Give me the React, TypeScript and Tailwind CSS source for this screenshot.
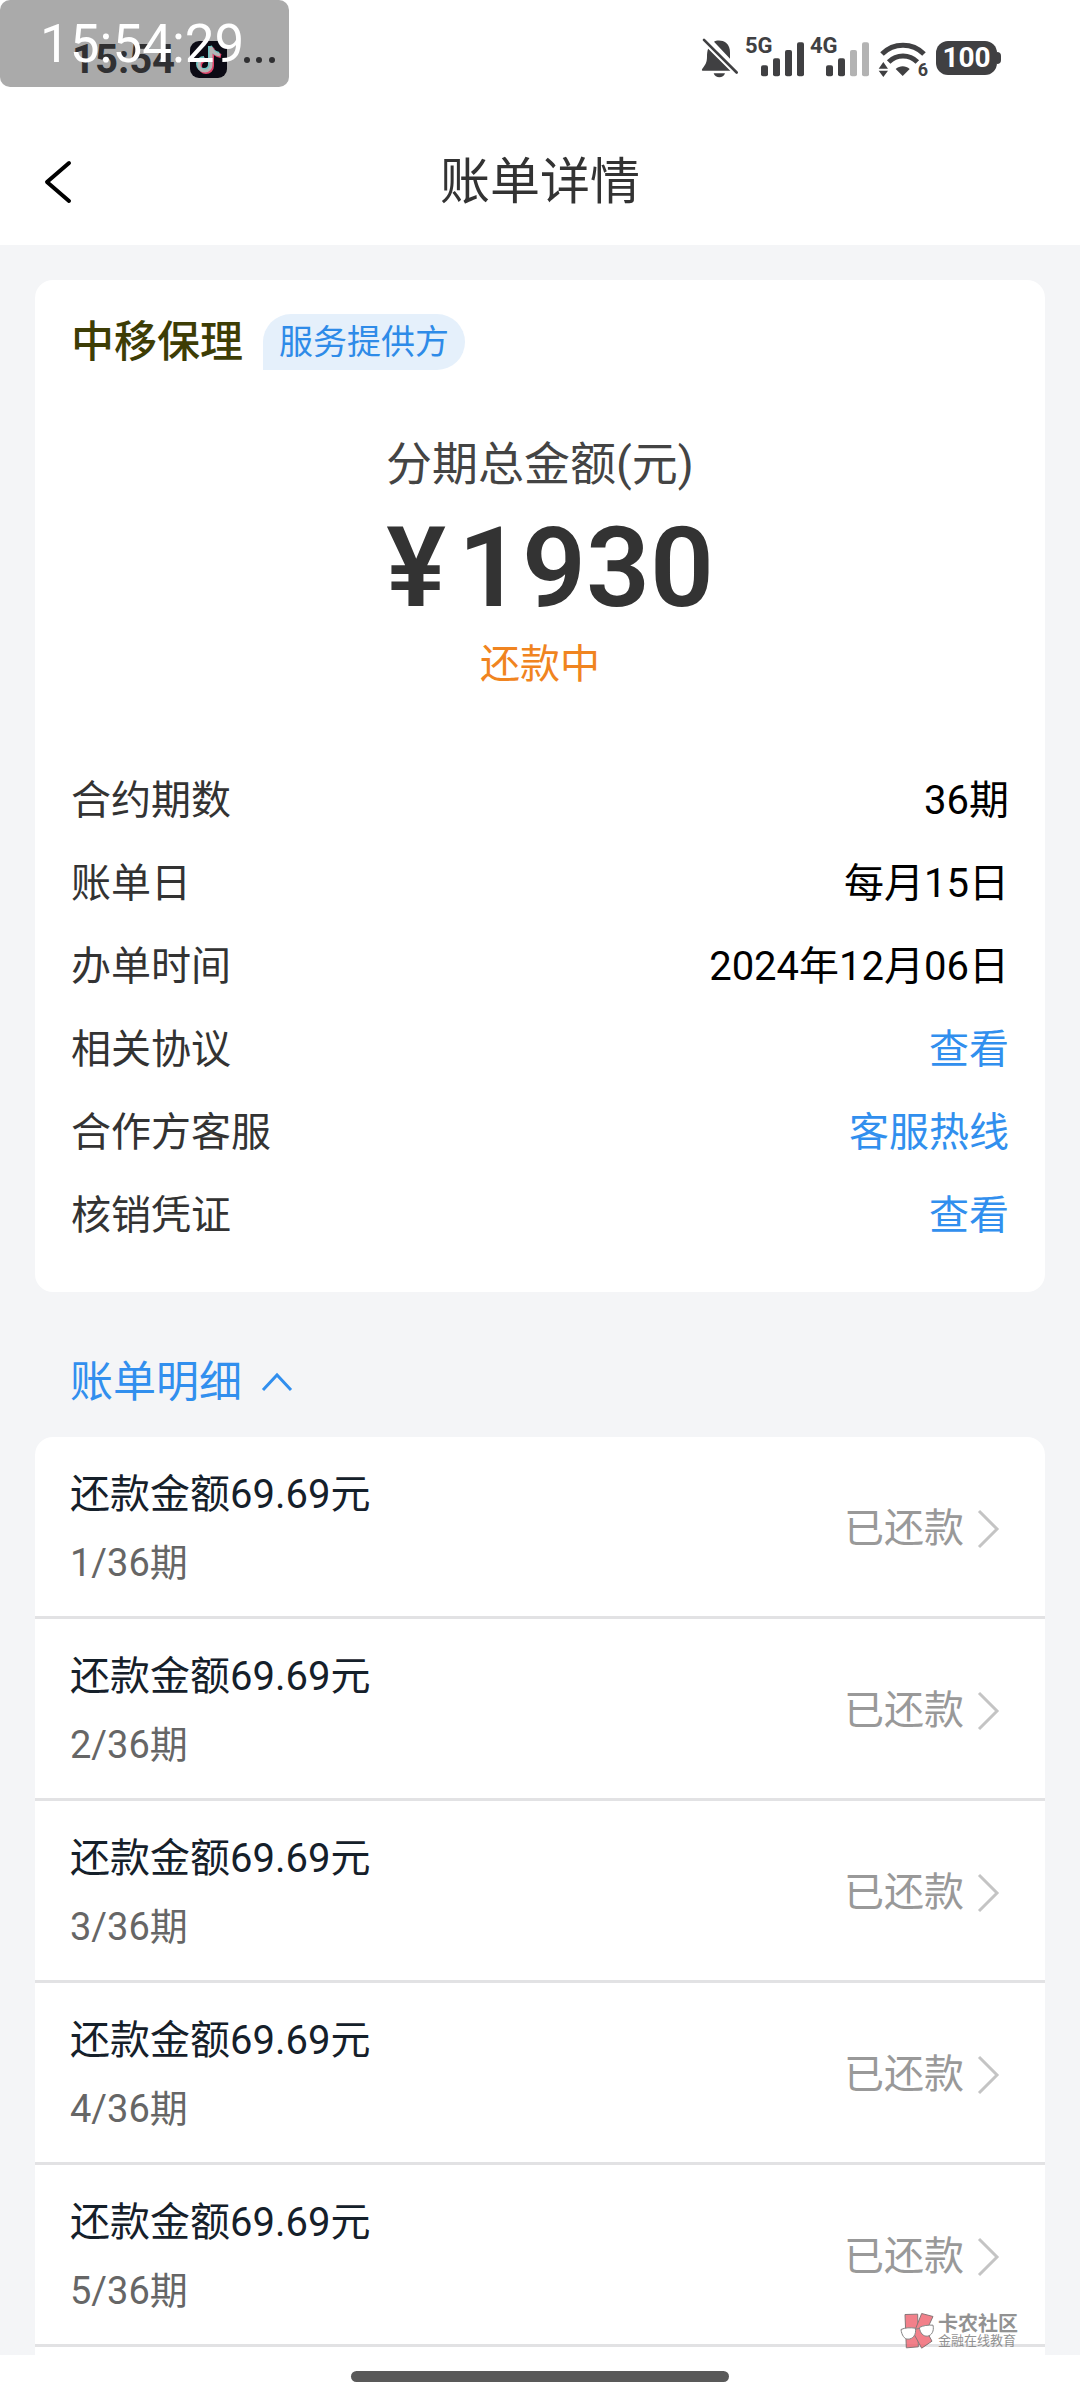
import { FC, useState } from "react";

type DetailRow = {
  label: string;
  value: string;
  href?: string;
};

const details: DetailRow[] = [
  { label: "合约期数", value: "36期" },
  { label: "账单日", value: "每月15日" },
  { label: "办单时间", value: "2024年12月06日" },
  { label: "相关协议", value: "查看", href: "#agreement" },
  { label: "合作方客服", value: "客服热线", href: "#hotline" },
  { label: "核销凭证", value: "查看", href: "#voucher" },
];

const TOTAL_PERIODS = 36;
const bills = [1, 2, 3, 4, 5].map((period) => ({ period, amount: "69.69", status: "已还款" }));

const BellOffIcon: FC = () => (
  <svg viewBox="50 50 120 125" className="w-[40px] h-[42px]" fill="#404042">
    <path d="M92 64c6-5 26-6 36 3c9 8 12 17 12 30v18z" />
    <path d="M75 83l68 68H58c-3 0-3-3-1-6c10-13 14-20 14-36c0-10 1-19 4-26z" />
    <path d="M91 158h34c-4 16-30 16-34 0z" />
    <path d="M62 58l98 98" stroke="#fff" strokeWidth="20" />
    <path d="M62 58l98 98" stroke="#404042" strokeWidth="8" strokeLinecap="round" />
  </svg>
);

type SignalProps = {
  label: string;
  strength: number;
};

const Signal: FC<SignalProps> = ({ label, strength }) => (
  <div className="relative w-[60px] h-[42px]">
    <span className="absolute left-0 top-0 text-[22px] leading-[18px] font-bold">{label}</span>
    <svg viewBox="0 0 180 126" className="w-full h-full">
      {[
        { x: 48, y: 85 },
        { x: 84, y: 64 },
        { x: 120, y: 39 },
        { x: 156, y: 16 },
      ].map(({ x, y }, i) => (
        <rect key={x} x={x} y={y} width="21" height={118 - y} rx="6" fill={i < strength ? "#404042" : "#b3b3b3"} />
      ))}
    </svg>
  </div>
);

const WifiIcon: FC = () => (
  <div className="relative w-[50px] h-[42px]">
    <svg viewBox="585 50 150 126" className="w-full h-full">
      <g fill="none" stroke="#404042" strokeWidth="15">
        <path d="M597 101c35-35 91-35 126 0" />
        <path d="M617 125c24-24 62-24 86 0" />
      </g>
      <path d="M638 146c12-11 30-11 42 0l-21 21z" fill="#404042" />
      <path d="M587 145l14-20l14 20zM587 151h28l-14 19z" fill="#404042" />
    </svg>
    <span className="absolute right-0 bottom-0 text-[18px] leading-[18px] font-bold">6</span>
  </div>
);

const Battery: FC = () => (
  <div className="flex items-center">
    <div className="w-[61px] h-[34px] rounded-[12px] bg-[#404042] text-white text-[28px] leading-[34px] font-bold text-center">
      100
    </div>
    <div className="w-[4px] h-[12px] rounded-r-[4px] bg-[#404042]" />
  </div>
);

const TikTokIcon: FC = () => (
  <svg viewBox="0 0 37 37" className="w-[37px] h-[37px]">
    <rect width="37" height="37" rx="9" fill="#0b0a14" />
    <g fill="none" strokeWidth="4">
      <path d="M21 6v18a6 6 0 1 1-6-6M21 6c1 5 4 7 9 8" stroke="#e0446a" transform="translate(1 1)" />
      <path d="M21 6v18a6 6 0 1 1-6-6M21 6c1 5 4 7 9 8" stroke="#6cc5c4" transform="translate(-1 -1)" />
      <path d="M21 6v18a6 6 0 1 1-6-6M21 6c1 5 4 7 9 8" stroke="#b5b5b5" strokeWidth="3" />
    </g>
  </svg>
);

const StatusBar: FC = () => (
  <div className="relative flex items-start justify-between h-[119px] pl-[72px] pr-[79px] text-[#404042]">
    {/* floating clock, sits over the system time */}
    <div className="absolute left-0 top-0 w-[289px] h-[87px] rounded-[10px] bg-[#aaaaaa]" />
    <div className="relative flex items-center pt-[41px] text-[#303032]">
      <span className="w-[118px] text-[40px] leading-[37px] font-bold">15:54</span>
      <TikTokIcon />
      <svg viewBox="0 0 34 8" className="w-[34px] h-[8px] ml-[16px]" fill="#303032">
        <circle cx="4" cy="4" r="3" />
        <circle cx="16" cy="4" r="3" />
        <circle cx="29" cy="4" r="3" />
      </svg>
    </div>
    <time className="absolute left-[40px] top-[12px] text-[53px] leading-[64px] text-white">15:54:29</time>
    <div className="flex items-center gap-[8px] pt-[37px]">
      <div className="flex items-center gap-[5px]">
        <BellOffIcon />
        <Signal label="5G" strength={4} />
        <Signal label="4G" strength={2} />
      </div>
      <WifiIcon />
      <Battery />
    </div>
  </div>
);

const Watermark: FC = () => (
  <div className="absolute right-[62px] bottom-[51px] flex items-center gap-[3px] opacity-80">
    <svg viewBox="120 95 105 110" className="w-[35px] h-[37px]" strokeWidth="3" strokeLinejoin="round">
      <g fill="#f0616d" stroke="#6b5557">
        <path d="M135 102l38-1l2 98l-36 3z" />
        <path d="M185 99l34 9l-20 43l17 31l-31 21l-24-44z" />
      </g>
      <g fill="#fff" stroke="#666">
        <path d="M123 147c12-6 29-6 43-4c4 20-8 33-22 33c-11 0-19-12-21-29z" />
        <path d="M178 141c12-6 26-8 41-7c4 18-4 31-17 33c-12 1-22-9-24-26z" />
        <path d="M166 146l12-2" />
      </g>
    </svg>
    <div className="text-[#777777]">
      <div className="text-[20px] leading-[20px] font-bold">卡农社区</div>
      <div className="text-[13px] leading-[14px]">金融在线教育</div>
    </div>
  </div>
);

export default function App() {
  const [open, setOpen] = useState(true);

  return (
    <div className="relative flex flex-col min-h-screen bg-white text-[#333333] font-[Roboto,'Noto_Sans_CJK_SC',sans-serif]">
      <header>
        <StatusBar />
        <div className="grid grid-cols-[1fr_auto_1fr] items-center h-[126px] px-[43px]">
          <button aria-label="返回" className="justify-self-start">
            <svg viewBox="0 0 30 46" className="w-[30px] h-[46px]" fill="none" stroke="#000" strokeWidth="4" strokeLinecap="round" strokeLinejoin="round">
              <path d="M26 4L4 23L26 42" />
            </svg>
          </button>
          <h1 className="text-[50px] leading-[64px]">账单详情</h1>
        </div>
      </header>

      <main className="grow bg-[#f4f5f7] px-[35px] pt-[35px]">
        <section className="rounded-[18px] bg-white px-[36px] pt-[34px] pb-[35px]">
          <div className="flex items-center gap-[20px]">
            <h2 className="text-[43px] leading-[56px] font-medium text-[#3d3d05]">中移保理</h2>
            <span className="h-[56px] px-[16px] rounded-full rounded-bl-[2px] bg-[#e5f0fb] text-[34px] leading-[56px] text-[#2e8be8]">
              服务提供方
            </span>
          </div>

          <div className="flex flex-col items-center">
            <p className="mt-[66px] text-[46px] leading-[56px] text-[#444444]">分期总金额(元)</p>
            <p className="mt-[20px] flex gap-[12px] pl-[20px] text-[112px] leading-[112px] font-semibold">
              <span>¥</span>
              <span>1930</span>
            </p>
            <p className="mt-[13px] text-[40px] leading-[56px] text-[#f08420]">还款中</p>
          </div>

          <dl className="mt-[66px] text-[40px] leading-[83px]">
            {details.map(({ label, value, href }) => (
              <div key={label} className="flex justify-between">
                <dt>{label}</dt>
                <dd className="text-black">
                  {href ? (
                    <a href={href} className="text-[#318fee]">
                      {value}
                    </a>
                  ) : (
                    value
                  )}
                </dd>
              </div>
            ))}
          </dl>
        </section>

        <button
          onClick={() => setOpen(!open)}
          aria-expanded={open}
          className="flex items-center gap-[19px] pl-[35px] pt-[62px] pb-[27px] text-[43px] leading-[56px] text-[#318fee]">
          账单明细
          <svg viewBox="0 0 32 20" className="w-[32px] h-[20px]" fill="none" stroke="currentColor" strokeWidth="3">
            <path d="M2 18L16 3L30 18" />
          </svg>
        </button>

        {open && (
          <ul className="rounded-t-[18px] bg-white pb-2">
            {bills.map(({ period, amount, status }) => (
              <li key={period} className="border-b-3 border-[#e2e2e4]">
                <button className="flex w-full items-center justify-between pl-[35px] pr-[45px] pt-[30px] pb-[25px] text-left">
                  <span className="flex flex-col gap-[12px]">
                    <span className="text-[40px] leading-[56px] text-[#15202a]">还款金额{amount}元</span>
                    <span className="text-[38px] leading-[56px] text-[#666666]">
                      {period}/{TOTAL_PERIODS}期
                    </span>
                  </span>
                  <span className="flex items-center gap-[12px] text-[40px] leading-[56px] text-[#999999]">
                    {status}
                    <svg viewBox="0 0 24 40" className="w-[24px] h-[40px]" fill="none" stroke="#c4c4c4" strokeWidth="3">
                      <path d="M3 2L21 20L3 38" />
                    </svg>
                  </span>
                </button>
              </li>
            ))}
          </ul>
        )}
      </main>

      <footer className="flex justify-center h-[45px] pt-[16px]">
        <div className="w-[35%] h-[11px] rounded-full bg-[#595959]" />
      </footer>

      <Watermark />
    </div>
  );
}
